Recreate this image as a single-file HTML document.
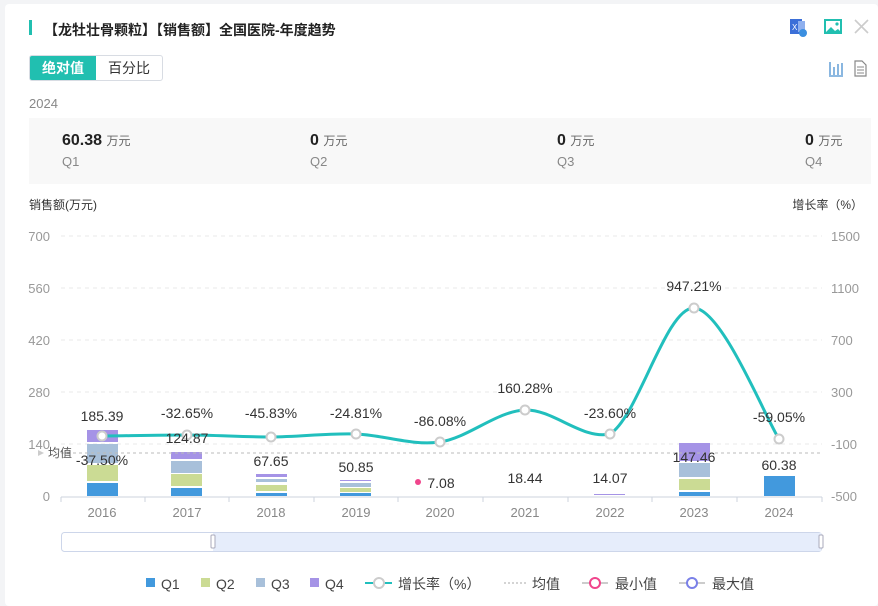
<!DOCTYPE html>
<html><head><meta charset="utf-8"><style>
*{margin:0;padding:0;box-sizing:border-box}
body{width:878px;height:606px;background:#f3f4f6;font-family:"Liberation Sans","Noto Sans CJK SC",sans-serif;position:relative;overflow:hidden}
.card{position:absolute;left:5px;top:4px;width:873px;height:602px;background:#fff;border-radius:4px}
.abs{position:absolute}
.title{left:44px;top:20px;font-size:14px;font-weight:bold;color:#222}
.bar{left:29px;top:20px;width:3px;height:15px;background:#21bfb0}
.seg{left:29px;top:55px;height:26px;border:1px solid #d8dce3;border-radius:3px;display:flex;font-size:14px;overflow:hidden}
.seg div{padding:0 12px;line-height:24px}
.stat{left:29px;top:118px;width:842px;height:66px;background:#f8f8f8}
.v{font-size:16px;font-weight:bold;color:#222}
.u{font-size:12px;color:#666;font-weight:normal}
.q{font-size:13px;color:#888}
</style></head><body>
<div class="card"></div>
<div class="abs bar"></div>
<div class="abs title">【龙牡壮骨颗粒】【销售额】全国医院-年度趋势</div>
<svg class="abs" style="left:788px;top:17px" width="85" height="65" viewBox="0 0 85 65">
<rect x="2" y="2" width="12" height="15" fill="#3b6fd8"/><text x="4" y="13" font-size="8" fill="#fff" font-family="Liberation Sans">X</text><rect x="10" y="4" width="7" height="11" fill="#8fb0ee"/><circle cx="15" cy="16" r="4" fill="#3b8fe0"/>
<rect x="37" y="3" width="16" height="13" fill="none" stroke="#21bfb0" stroke-width="2"/><path d="M38 15l5-5 4 4 3-2 3 3z" fill="#21bfb0"/><circle cx="49" cy="7" r="1.6" fill="#21bfb0"/>
<path d="M67 3l13 13M80 3L67 16" stroke="#ccc" stroke-width="1.6"/>
<path d="M42 45v13M46 50v8M50 47v11M54 46v12M41 59h14" stroke="#4a90d0" stroke-width="1.3" fill="none"/>
<path d="M67 44h7l4 4v11h-11z" fill="none" stroke="#888" stroke-width="1.2"/><path d="M69 50h7M69 53h7M69 56h7" stroke="#888"/>
</svg>
<div class="abs seg"><div style="background:#21bfb0;color:#fff;font-weight:bold">绝对值</div><div style="color:#333">百分比</div></div>
<div class="abs" style="left:29px;top:96px;font-size:13px;color:#888">2024</div>
<div class="abs stat"></div>
<div class="abs" style="left:62px;top:132px"><span class="v">60.38</span> <span class="u">万元</span><div class="q" style="margin-top:4px">Q1</div></div>
<div class="abs" style="left:310px;top:132px"><span class="v">0</span> <span class="u">万元</span><div class="q" style="margin-top:4px">Q2</div></div>
<div class="abs" style="left:557px;top:132px"><span class="v">0</span> <span class="u">万元</span><div class="q" style="margin-top:4px">Q3</div></div>
<div class="abs" style="left:805px;top:132px"><span class="v">0</span> <span class="u">万元</span><div class="q" style="margin-top:4px">Q4</div></div>
<svg class="abs" style="left:0;top:0" width="878" height="606" font-family="Liberation Sans,Noto Sans CJK SC,sans-serif">
<text x="29" y="209" font-size="12" fill="#333">销售额(万元)</text>
<text x="863" y="209" font-size="12" fill="#333" text-anchor="end">增长率（%）</text>
<g stroke="#e8e8e8" stroke-dasharray="4,4">
<line x1="61" y1="236" x2="822" y2="236"/><line x1="61" y1="288" x2="822" y2="288"/><line x1="61" y1="340" x2="822" y2="340"/><line x1="61" y1="392" x2="822" y2="392"/><line x1="61" y1="444" x2="822" y2="444"/></g>
<line x1="61" y1="497" x2="822" y2="497" stroke="#ccd3dd"/>
<g stroke="#ccd3dd"><line x1="61" y1="497" x2="61" y2="502"/><line x1="145" y1="497" x2="145" y2="502"/><line x1="229" y1="497" x2="229" y2="502"/><line x1="314" y1="497" x2="314" y2="502"/><line x1="398" y1="497" x2="398" y2="502"/><line x1="483" y1="497" x2="483" y2="502"/><line x1="568" y1="497" x2="568" y2="502"/><line x1="652" y1="497" x2="652" y2="502"/><line x1="737" y1="497" x2="737" y2="502"/><line x1="822" y1="497" x2="822" y2="502"/></g>
<g font-size="13" fill="#999" text-anchor="end"><text x="50" y="241">700</text><text x="50" y="293">560</text><text x="50" y="345">420</text><text x="50" y="397">280</text><text x="50" y="449">140</text><text x="50" y="501">0</text></g>
<g font-size="13" fill="#999"><text x="831" y="241">1500</text><text x="831" y="293">1100</text><text x="831" y="345">700</text><text x="831" y="397">300</text><text x="831" y="449">-100</text><text x="831" y="501">-500</text></g>
<g font-size="13" fill="#888" text-anchor="middle"><text x="102" y="517">2016</text><text x="187" y="517">2017</text><text x="271" y="517">2018</text><text x="356" y="517">2019</text><text x="440" y="517">2020</text><text x="525" y="517">2021</text><text x="610" y="517">2022</text><text x="694" y="517">2023</text><text x="779" y="517">2024</text></g>
<g>
<rect x="87" y="430" width="31" height="12" fill="#a593e6"/><rect x="87" y="444" width="31" height="19" fill="#a8c0da"/><rect x="87" y="465" width="31" height="16" fill="#cbdb94"/><rect x="87" y="483" width="31" height="13" fill="#4299dd"/>
<rect x="171" y="452" width="31" height="7" fill="#a593e6"/><rect x="171" y="461" width="31" height="12" fill="#a8c0da"/><rect x="171" y="474" width="31" height="12" fill="#cbdb94"/><rect x="171" y="488" width="31" height="8" fill="#4299dd"/>
<rect x="256" y="474" width="31" height="3" fill="#a593e6"/><rect x="256" y="479" width="31" height="3" fill="#a8c0da"/><rect x="256" y="485" width="31" height="6" fill="#cbdb94"/><rect x="256" y="493" width="31" height="3" fill="#4299dd"/>
<rect x="340" y="480" width="31" height="1" fill="#a593e6"/><rect x="340" y="483" width="31" height="4" fill="#a8c0da"/><rect x="340" y="488" width="31" height="4" fill="#cbdb94"/><rect x="340" y="493" width="31" height="3" fill="#4299dd"/>
<rect x="594" y="494" width="31" height="1" fill="#a593e6"/>
<rect x="679" y="443" width="31" height="18" fill="#a593e6"/><rect x="679" y="463" width="31" height="14" fill="#a8c0da"/><rect x="679" y="479" width="31" height="11" fill="#cbdb94"/><rect x="679" y="492" width="31" height="4" fill="#4299dd"/>
<rect x="764" y="476" width="31" height="20" fill="#4299dd"/>
</g>
<line x1="61" y1="453" x2="822" y2="453" stroke="#bbb" stroke-dasharray="3,3"/>
<path d="M44 453l-6-3v6z" fill="#ccc"/><text x="48" y="457" font-size="12" fill="#555">均值</text>
<path d="M102 436C116 436 159 435 187 435C215 435 243 437 271 437C299 437 328 433 356 434C384 435 412 446 440 442C468 438 497 411 525 410C553 409 582 440 610 434C638 417 666 307 694 308C722 309 765 417 779 439" fill="none" stroke="#21bfbd" stroke-width="3"/>
<g fill="#fff" stroke="#ccc" stroke-width="2"><circle cx="102" cy="436" r="4.5"/><circle cx="187" cy="435" r="4.5"/><circle cx="271" cy="437" r="4.5"/><circle cx="356" cy="434" r="4.5"/><circle cx="440" cy="442" r="4.5"/><circle cx="525" cy="410" r="4.5"/><circle cx="610" cy="434" r="4.5"/><circle cx="694" cy="308" r="4.5"/><circle cx="779" cy="439" r="4.5"/></g>
<g font-size="14" fill="#333" text-anchor="middle">
<text x="102" y="421">185.39</text><text x="102" y="465">-37.50%</text>
<text x="187" y="418">-32.65%</text><text x="187" y="443">124.87</text>
<text x="271" y="418">-45.83%</text><text x="271" y="466">67.65</text>
<text x="356" y="418">-24.81%</text><text x="356" y="472">50.85</text>
<text x="440" y="426">-86.08%</text><text x="441" y="488">7.08</text>
<text x="525" y="393">160.28%</text><text x="525" y="483">18.44</text>
<text x="610" y="418">-23.60%</text><text x="610" y="483">14.07</text>
<text x="694" y="291">947.21%</text><text x="694" y="462">147.46</text>
<text x="779" y="422">-59.05%</text><text x="779" y="470">60.38</text></g>
<circle cx="418" cy="482" r="3" fill="#f0458c"/>
<rect x="61.5" y="532.5" width="760" height="19" rx="3" fill="#fff" stroke="#cdd6ea"/>
<rect x="213" y="533" width="608" height="18" fill="#e6edfb"/>
<rect x="211" y="535" width="4" height="13" rx="1" fill="#fff" stroke="#aab"/>
<rect x="819" y="535" width="4" height="13" rx="1" fill="#fff" stroke="#aab"/>
<g font-size="14" fill="#444">
<rect x="146" y="578" width="9" height="9" fill="#4299dd"/><text x="161" y="589">Q1</text>
<rect x="201" y="578" width="9" height="9" fill="#cbdb94"/><text x="216" y="589">Q2</text>
<rect x="256" y="578" width="9" height="9" fill="#a8c0da"/><text x="271" y="589">Q3</text>
<rect x="310" y="578" width="9" height="9" fill="#a593e6"/><text x="325" y="589">Q4</text>
<line x1="365" y1="583" x2="392" y2="583" stroke="#21bfbd" stroke-width="2"/><circle cx="379" cy="583" r="5" fill="#fff" stroke="#ccc" stroke-width="2"/><text x="398" y="589">增长率（%）</text>
<line x1="504" y1="583" x2="526" y2="583" stroke="#aaa" stroke-dasharray="2,2"/><text x="532" y="589">均值</text>
<line x1="582" y1="583" x2="608" y2="583" stroke="#ccc" stroke-width="2"/><circle cx="595" cy="583" r="5" fill="#fff" stroke="#f0458c" stroke-width="2"/><text x="615" y="589">最小值</text>
<line x1="679" y1="583" x2="705" y2="583" stroke="#ccc" stroke-width="2"/><circle cx="692" cy="583" r="5" fill="#fff" stroke="#7a80e8" stroke-width="2"/><text x="712" y="589">最大值</text>
</g>
</svg>
</body></html>
